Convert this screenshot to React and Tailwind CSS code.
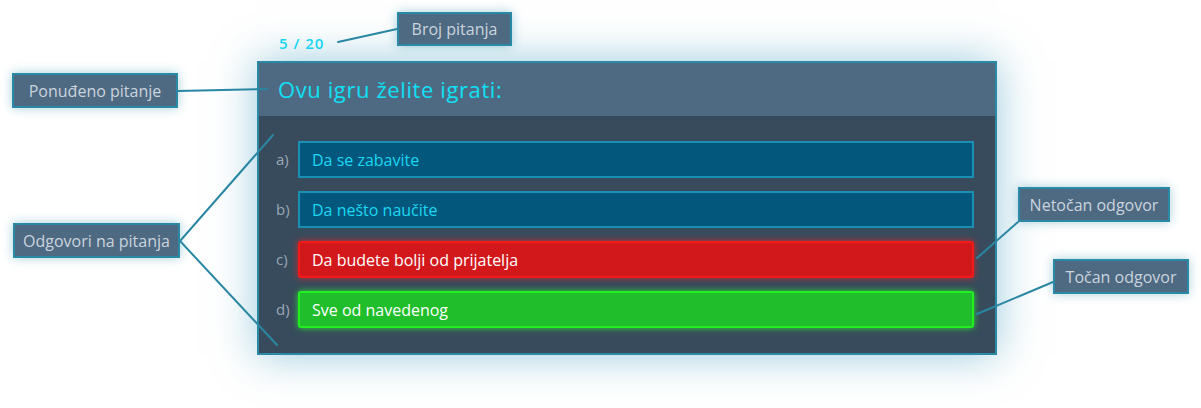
import React from "react";

const answers = [
  { key: "a)", text: "Da se zabavite", kind: "idle" },
  { key: "b)", text: "Da nešto naučite", kind: "idle" },
  { key: "c)", text: "Da budete bolji od prijatelja", kind: "wrong" },
  { key: "d)", text: "Sve od navedenog", kind: "right" },
];

const boxStyles = {
  idle: "bg-[#03577c] border-2 border-[#1a8fb4] text-[#1ad6f2]",
  wrong:
    "bg-[#d2181b] border-2 border-[#f21a1a] text-white rounded-[3px] shadow-[0_0_6px_rgba(255,30,30,0.8)]",
  right:
    "bg-[#1fbe2a] border-2 border-[#23f023] text-white rounded-[3px] shadow-[0_0_6px_rgba(40,255,40,0.8)]",
};

// callout labels sit on the diagram canvas
function Note({ className, children }) {
  return (
    <div
      className={
        "absolute flex items-center justify-center bg-[#4e6982] border-2 border-[#2a8aa6] text-[#cbd4de] text-[16px] shadow-[0_0_10px_rgba(60,150,180,0.45)] " +
        className
      }
    >
      {children}
    </div>
  );
}

export default function App() {
  return (
    <div
      className="relative w-[1201px] h-[408px] bg-white overflow-hidden"
      style={{ fontFamily: "'Open Sans', 'Noto Sans', sans-serif" }}
    >
      {/* quiz panel */}
      <div className="pl-[257px] pt-[61px]">
        <div className="w-[740px] border-2 border-[#2a8aa6] shadow-[0_0_40px_rgba(50,150,185,0.5)]">
          <div className="h-[53px] bg-[#4e6a82] flex items-center pl-[19px]">
            <span className="text-[22px] text-[#0ee0f6] tracking-[0.6px]">
              Ovu igru želite igrati:
            </span>
          </div>
          <div className="bg-[#384b5c] pt-[25px] pb-[25px] pr-[21px] flex flex-col gap-[13px]">
            {answers.map((a) => (
              <div key={a.key} className="flex items-center">
                <span className="w-[39px] pl-[17px] text-[15px] text-[#9aa7b4]">
                  {a.key}
                </span>
                <div
                  className={
                    "flex-1 h-[37px] flex items-center pl-[12px] text-[16px] " +
                    boxStyles[a.kind]
                  }
                >
                  {a.text}
                </div>
              </div>
            ))}
          </div>
        </div>
      </div>

      {/* question counter */}
      <div className="absolute left-[279px] top-[32px] text-[15px] font-semibold tracking-[1px] text-[#14d6f2]">
        5 / 20
      </div>

      {/* callout lines */}
      <svg
        className="absolute inset-0 pointer-events-none"
        width="1201"
        height="408"
        viewBox="0 0 1201 408"
      >
        <g stroke="#2a87a3" strokeWidth="2" fill="none" strokeLinecap="round">
          <line x1="338" y1="42" x2="397" y2="29" />
          <line x1="178" y1="91" x2="267" y2="89" />
          <polyline points="273,135 180,241 277,345" />
          <line x1="977" y1="258" x2="1018" y2="222" />
          <line x1="977" y1="314" x2="1053" y2="282" />
        </g>
      </svg>

      <Note className="left-[397px] top-[12px] w-[115px] h-[34px]">Broj pitanja</Note>
      <Note className="left-[12px] top-[73px] w-[166px] h-[35px]">Ponuđeno pitanje</Note>
      <Note className="left-[13px] top-[223px] w-[167px] h-[35px]">Odgovori na pitanja</Note>
      <Note className="left-[1018px] top-[187px] w-[152px] h-[35px]">Netočan odgovor</Note>
      <Note className="left-[1053px] top-[259px] w-[136px] h-[35px]">Točan odgovor</Note>
    </div>
  );
}
